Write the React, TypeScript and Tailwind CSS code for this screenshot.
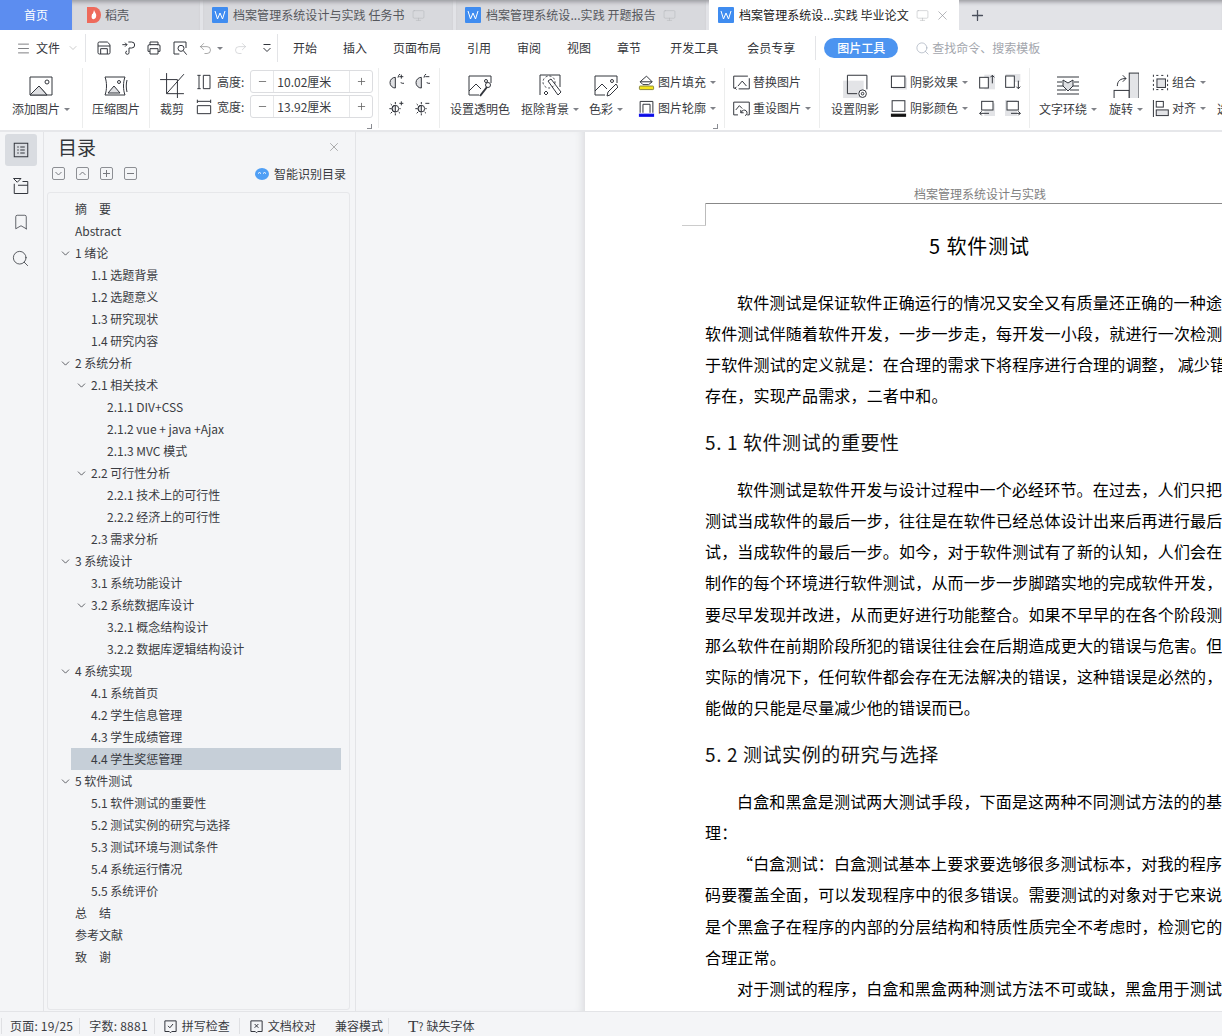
import type { ReactNode } from 'react';
import { Bookmark, ChevronDown, Menu, Minus, Monitor, Plus, Redo2, Search, Undo2, X } from 'lucide-react';

const FONT = '"Noto Sans CJK SC", "Liberation Sans", sans-serif';

type TocItem = { label: string; level: number; open?: boolean; active?: boolean };

const toc: TocItem[] = [
  { label: '摘　要', level: 0 },
  { label: 'Abstract', level: 0 },
  { label: '1 绪论', level: 0, open: true },
  { label: '1.1 选题背景', level: 1 },
  { label: '1.2 选题意义', level: 1 },
  { label: '1.3 研究现状', level: 1 },
  { label: '1.4 研究内容', level: 1 },
  { label: '2 系统分析', level: 0, open: true },
  { label: '2.1 相关技术', level: 1, open: true },
  { label: '2.1.1 DIV+CSS', level: 2 },
  { label: '2.1.2 vue + java +Ajax', level: 2 },
  { label: '2.1.3 MVC 模式', level: 2 },
  { label: '2.2 可行性分析', level: 1, open: true },
  { label: '2.2.1 技术上的可行性', level: 2 },
  { label: '2.2.2 经济上的可行性', level: 2 },
  { label: '2.3 需求分析', level: 1 },
  { label: '3 系统设计', level: 0, open: true },
  { label: '3.1 系统功能设计', level: 1 },
  { label: '3.2 系统数据库设计', level: 1, open: true },
  { label: '3.2.1 概念结构设计', level: 2 },
  { label: '3.2.2 数据库逻辑结构设计', level: 2 },
  { label: '4 系统实现', level: 0, open: true },
  { label: '4.1 系统首页', level: 1 },
  { label: '4.2 学生信息管理', level: 1 },
  { label: '4.3 学生成绩管理', level: 1 },
  { label: '4.4 学生奖惩管理', level: 1, active: true },
  { label: '5 软件测试', level: 0, open: true },
  { label: '5.1 软件测试的重要性', level: 1 },
  { label: '5.2 测试实例的研究与选择', level: 1 },
  { label: '5.3 测试环境与测试条件', level: 1 },
  { label: '5.4 系统运行情况', level: 1 },
  { label: '5.5 系统评价', level: 1 },
  { label: '总　结', level: 0 },
  { label: '参考文献', level: 0 },
  { label: '致　谢', level: 0 },
];

// small stroke icon wrapper, 24 unit box
const Ico = ({ size = 24, children, className = '' }: { size?: number; children: ReactNode; className?: string }) => (
  <svg
    width={size}
    height={size}
    viewBox="0 0 24 24"
    fill="none"
    stroke="#33363d"
    strokeWidth={24 / size}
    className={`shrink-0 ${className}`}
  >
    {children}
  </svg>
);

const Caret = () => <span className="ml-[4px] inline-block h-0 w-0 border-x-[3px] border-t-[3px] border-x-transparent border-t-[#808288]" />;

const WpsTabIcon = () => (
  <div className="flex h-[16px] w-[16px] shrink-0 items-center justify-center rounded-[1px] bg-[#3f8cf0]">
    <svg width="12" height="10" viewBox="0 0 12 10" fill="none" stroke="#fff" strokeWidth="1">
      <path d="M1 1l2.500 8L6 3l2.500 6L11 1" />
    </svg>
  </div>
);

const tabShade = 'shadow-[inset_0_5px_4px_-3px_#97989d]';

const DocTab = ({ title, active }: { title: string; active?: boolean }) => (
  <div
    className={`flex h-[30px] w-[250px] items-center pl-[9px] text-[12px] ${
      active ? 'bg-white text-[#222]' : `bg-[#d8d9dd] text-[#55575c] ${tabShade}`
    }`}
  >
    <WpsTabIcon />
    <span className="ml-[5px] whitespace-nowrap tracking-[0.060px]">{title}</span>
    <Monitor size={13} strokeWidth={1} className="ml-[7px] text-[#b4b6bb]" />
    {active && <X size={15} strokeWidth={1} className="ml-[6px] text-[#8a8c92]" />}
  </div>
);

const TabBar = () => (
  <div className={`flex h-[30px] shrink-0 bg-[#e2e3e7] ${tabShade}`}>
    <div className="flex h-[30px] w-[72px] items-center justify-center bg-[#5c8df0] text-[12px] text-white">首页</div>
    <div className={`flex h-[30px] w-[128px] items-center bg-[#d8d9dd] pl-[14px] text-[12px] text-[#55575c] ${tabShade}`}>
      <svg width="16" height="16" viewBox="0 0 16 16" className="shrink-0">
        <path d="M1 0h7a7 8 0 010 16H1z" fill="#ee6a5b" />
        <path d="M8 3c1 3 3 4 2 7-.5 2-3 3-4 1.500C5 10 6 8 6 7c1 .5 1.500-2 2-4z" fill="#fff" />
      </svg>
      <span className="ml-[3px]">稻壳</span>
    </div>
    <div className="w-[3px]" />
    <DocTab title="档案管理系统设计与实践 任务书" />
    <div className="w-[3px]" />
    <DocTab title="档案管理系统设...实践 开题报告" />
    <div className="w-[3px]" />
    <DocTab title="档案管理系统设...实践 毕业论文" active />
    <Plus size={17} strokeWidth={1.800} className="ml-[10px] mt-[7px] text-[#4a4f5c]" />
  </div>
);

const QuickIcons = () => (
  <div className="ml-[10px] flex items-center">
    <Ico size={16}>
      <path d="M3 5a2 2 0 012-2h12l4 4v12a2 2 0 01-2 2H5a2 2 0 01-2-2zM3 9h18M7 21v-8h10v8" />
    </Ico>
    <Ico size={16} className="ml-[9px]">
      <path d="M11 3h5a4.500 4.500 0 010 9h-4v7a2.500 2.500 0 11-3-2.500M2 7h7M6 4l3 3-3 3" />
    </Ico>
    <Ico size={16} className="ml-[9px]">
      <path d="M6 8V3h12v5M6 17H3V9a2 2 0 012-2h14a2 2 0 012 2v8h-3M6 13h12v8H6z" />
    </Ico>
    <Ico size={16} className="ml-[10px]">
      <path d="M11 21H3V3h18v9M13.500 8a4.500 4.500 0 100 9 4.500 4.500 0 000-9zM17 16l5 6" />
    </Ico>
    <Undo2 size={15} strokeWidth={1} className="ml-[10px] text-[#777]" />
    <Caret />
    <Redo2 size={15} strokeWidth={1} className="ml-[10px] text-[#c4c5c9]" />
    <Ico size={14} className="ml-[12px]">
      <path d="M6 6h12M6 12l6 6 6-6" />
    </Ico>
  </div>
);

const MenuRow = () => (
  <div className="flex h-[36px] shrink-0 items-center bg-white pl-[16px] text-[12px] text-[#33353a]">
    <Menu size={15} strokeWidth={1} className="text-[#33353a]" />
    <span className="ml-[5px]">文件</span>
    <ChevronDown size={12} strokeWidth={1} className="ml-[7px] text-[#999]" />
    <div className="ml-[6px] h-[28px] w-px bg-[#e3e4e7]" />
    <QuickIcons />
    <div className="ml-[3px] h-[28px] w-px bg-[#e3e4e7]" />
    <div className="ml-[15px] flex items-center gap-[26px] whitespace-nowrap">
      <span>开始</span>
      <span>插入</span>
      <span>页面布局</span>
      <span>引用</span>
      <span>审阅</span>
      <span>视图</span>
      <span>章节</span>
      <span className="ml-[3px]">开发工具</span>
      <span className="ml-[3px]">会员专享</span>
    </div>
    <div className="ml-[20px] h-[24px] w-px bg-[#e3e4e7]" />
    <div className="ml-[8px] flex h-[20px] w-[74px] items-center justify-center rounded-full bg-[#4c94f0] font-medium text-white">
      图片工具
    </div>
    <Search size={15} strokeWidth={1} className="ml-[17px] text-[#9aa3b3]" />
    <span className="ml-[2px] text-[#a3a6ad]">查找命令、搜索模板</span>
  </div>
);

const Sep = () => <div className="mt-[-2px] h-[60px] w-px shrink-0 bg-[#eceded]" />;

const BigBtn = ({ w, label, caret, children }: { w: number; label: string; caret?: boolean; children: ReactNode }) => (
  <div className="flex shrink-0 flex-col items-center" style={{ width: w }}>
    <div className="flex h-[30px] items-center justify-center">{children}</div>
    <div className="flex h-[18px] items-center whitespace-nowrap text-[12px]">
      {label}
      {caret && <Caret />}
    </div>
  </div>
);

const SmallBtn = ({ label, caret, children }: { label: string; caret?: boolean; children: ReactNode }) => (
  <div className="flex h-[20px] items-center whitespace-nowrap text-[12px]">
    {children}
    <span className="ml-[3px]">{label}</span>
    {caret && <Caret />}
  </div>
);

const Stepper = ({ value }: { value: string }) => (
  <div className="ml-[6px] flex h-[23px] w-[123px] items-center rounded-[3px] border border-[#dcdde0]">
    <div className="flex h-full w-[23px] items-center justify-center border-r border-[#e6e7e9]">
      <Minus size={11} strokeWidth={1.800} className="text-[#666]" />
    </div>
    <span className="flex-1 pl-[3px]">{value}</span>
    <div className="flex h-full w-[23px] items-center justify-center border-l border-[#e6e7e9]">
      <Plus size={11} strokeWidth={1.800} className="text-[#666]" />
    </div>
  </div>
);

// little corner mark at the bottom right of a ribbon group
const Launcher = () => (
  <div className="absolute bottom-[1px] right-[6px] h-[5px] w-[5px] border-b border-r border-[#8a8c92]" />
);

const Ribbon = () => (
  <div className="flex h-[64px] shrink-0 items-start overflow-hidden bg-white pt-[4px] text-[#3a3c42]">
    <BigBtn w={82} label="添加图片" caret>
      <Ico>
        <path d="M1 4h22v18H1zM1 22l9-9 8 9" />
        <path d="M1 22l9-9 8 9z" fill="#dfe0e3" />
        <circle cx="18" cy="9" r="2" />
      </Ico>
    </BigBtn>
    <Sep />
    <BigBtn w={66} label="压缩图片">
      <Ico>
        <path d="M1 4h20c-2 5-2 13 0 18H1c2-5 2-13 0-18z" />
        <path d="M4 20l6-7 6 7z" fill="#dfe0e3" />
        <circle cx="15" cy="9" r="1.500" />
        <path d="M23 7c-1 4-1 8 0 12" />
      </Ico>
    </BigBtn>
    <Sep />
    <div className="relative mt-[-2px] flex h-[62px] w-[228px] shrink-0 items-start pt-[2px]">
      <BigBtn w={44} label="裁剪">
        <Ico size={26}>
          <path d="M7 1v19h16M1 7h16v18M7 20L23 2" />
        </Ico>
      </BigBtn>
      <div className="ml-[2px] flex flex-col gap-[2px] text-[12px]">
        <div className="flex h-[23px] items-center">
          <Ico size={16}>
            <path d="M2 2h5M2 22h5M4.500 2v20M11 2h10v20H11z" />
          </Ico>
          <span className="ml-[5px]">高度:</span>
          <Stepper value="10.02厘米" />
        </div>
        <div className="flex h-[23px] items-center">
          <Ico size={16}>
            <path d="M2 1v5M22 1v5M2 3.500h20M2 10h20v12H2z" />
          </Ico>
          <span className="ml-[5px]">宽度:</span>
          <Stepper value="13.92厘米" />
        </div>
      </div>
      <Launcher />
    </div>
    <Sep />
    <div className="mt-[4px] grid w-[60px] shrink-0 grid-cols-2 justify-items-center gap-y-[10px] px-[4px]">
      <Ico size={16}>
        <path d="M11 5v16a8 8 0 010-16z" fill="#dfe0e3" />
        <path d="M15 5.500A8 8 0 1119 13M20 1v6M17 4h6" />
      </Ico>
      <Ico size={16}>
        <path d="M11 5v16a8 8 0 010-16z" fill="#dfe0e3" />
        <path d="M15 5.500A8 8 0 1119 13M17 4h6" />
      </Ico>
      <Ico size={16}>
        <path d="M11 8v10a5 5 0 010-10z" fill="#dfe0e3" />
        <circle cx="11" cy="13" r="5" />
        <path d="M11 3v3M11 20v3M2 13h3M17 13h2M4 6l2 2M4 20l2-2M18 20l-2-2M20 2v6M17 5h6" />
      </Ico>
      <Ico size={16}>
        <path d="M11 8v10a5 5 0 010-10z" fill="#dfe0e3" />
        <circle cx="11" cy="13" r="5" />
        <path d="M11 3v3M11 20v3M2 13h3M17 13h2M4 6l2 2M4 20l2-2M18 20l-2-2M17 5h6" />
      </Ico>
    </div>
    <Sep />
    <div className="relative mt-[-2px] flex h-[62px] w-[284px] shrink-0 items-start pt-[2px]">
      <BigBtn w={80} label="设置透明色">
        <Ico>
          <path d="M1 22V3h22v7M1 22h10M1 18l7-7 5 5" />
          <circle cx="18" cy="8" r="1.500" />
          <path d="M12 23l7-9" strokeWidth="2" />
          <circle cx="20" cy="12" r="2.500" />
        </Ico>
      </BigBtn>
      <BigBtn w={60} label="抠除背景" caret>
        <Ico>
          <path d="M2 22V2h20v12" />
          <circle cx="11" cy="9" r="6" strokeDasharray="2 2" />
          <path d="M10 8l3-2 10 13-3 3z" />
          <path d="M6 20l2 2 2-2-2-2z" />
        </Ico>
      </BigBtn>
      <BigBtn w={52} label="色彩" caret>
        <Ico>
          <path d="M1 22V3h22v7M1 22h10M1 18l7-7 5 5" />
          <circle cx="18" cy="8" r="1.500" />
          <path d="M13 23l1-4 8-8 2 3-8 8z" />
        </Ico>
      </BigBtn>
      <div className="ml-[6px] mt-[2px] flex flex-col gap-[6px]">
        <SmallBtn label="图片填充" caret>
          <Ico size={17}>
            <path d="M3 11l9-8 8 8-5 4H7z" />
            <path d="M3 11h17" />
            <rect x="2" y="17" width="20" height="5" rx="1" fill="#f5e51b" stroke="#8c8a40" />
          </Ico>
        </SmallBtn>
        <SmallBtn label="图片轮廓" caret>
          <Ico size={17}>
            <path d="M3 18V2h18v16M7 18V6h10v12" />
            <rect x="2" y="20" width="20" height="3" fill="#0b0be8" stroke="#0b0be8" />
          </Ico>
        </SmallBtn>
      </div>
      <Launcher />
    </div>
    <Sep />
    <div className="ml-[8px] mt-[2px] flex w-[86px] shrink-0 flex-col gap-[6px]">
      <SmallBtn label="替换图片">
        <Ico size={17}>
          <path d="M4 20H1V3h20M23 6v15H8" />
          <path d="M7 17l6-7 6 7M3 20l2-2M3 20l2 2" />
        </Ico>
      </SmallBtn>
      <SmallBtn label="重设图片" caret>
        <Ico size={17}>
          <path d="M7 21H1V3h22v18h-3M4 14l5-6 4 4" />
          <path d="M17 22a4 4 0 10-5-5l-1 1M11 14v4h4" />
        </Ico>
      </SmallBtn>
    </div>
    <Sep />
    <div className="flex w-[209px] shrink-0 items-start">
      <BigBtn w={70} label="设置阴影">
        <Ico size={26}>
          <rect x="1" y="8" width="19" height="16" fill="#e3e4e7" stroke="none" />
          <path d="M5 20V3h18v13M5 20h9" />
          <circle cx="19" cy="20" r="3.500" fill="#fff" />
          <circle cx="19" cy="20" r="1.200" />
        </Ico>
      </BigBtn>
      <div className="mt-[2px] flex flex-col gap-[6px]">
        <SmallBtn label="阴影效果" caret>
          <Ico size={17}>
            <rect x="4" y="5" width="20" height="17" fill="#e3e4e7" stroke="none" />
            <rect x="2" y="3" width="19" height="16" fill="#fff" />
          </Ico>
        </SmallBtn>
        <SmallBtn label="阴影颜色" caret>
          <Ico size={17}>
            <rect x="3" y="1" width="18" height="15" />
            <rect x="2" y="20" width="20" height="3" fill="#111" stroke="#111" />
          </Ico>
        </SmallBtn>
      </div>
      <div className="ml-[11px] mt-[4px] grid grid-cols-2 gap-x-[10px] gap-y-[10px]">
        <Ico size={16}>
          <rect x="8" y="1" width="16" height="22" fill="#e3e4e7" stroke="none" />
          <rect x="1" y="5" width="13" height="16" fill="#fff" />
          <path d="M20 2v12M17 5l3-3 3 3" />
        </Ico>
        <Ico size={16}>
          <rect x="1" y="0" width="22" height="12" fill="#e3e4e7" stroke="none" />
          <rect x="1" y="3" width="13" height="17" fill="#fff" />
          <path d="M20 10v12M17 19l3 3 3-3" />
        </Ico>
        <Ico size={16}>
          <rect x="8" y="5" width="16" height="19" fill="#e3e4e7" stroke="none" />
          <rect x="4" y="2" width="17" height="13" fill="#fff" />
          <path d="M1 20h14M4 17l-3 3 3 3" />
        </Ico>
        <Ico size={16}>
          <rect x="0" y="0" width="18" height="24" fill="#e3e4e7" stroke="none" />
          <rect x="3" y="2" width="17" height="13" fill="#fff" />
          <path d="M9 20h14M20 17l3 3-3 3" />
        </Ico>
      </div>
    </div>
    <Sep />
    <BigBtn w={76} label="文字环绕" caret>
      <Ico>
        <path d="M1 4h22M1 21h22M1 9h5M18 9h5M1 13h6M17 13h6M1 17h9M14 17h9" />
        <path d="M7 7l5 3 5-3v6l-5 5-5-5z" fill="#dfe0e3" />
      </Ico>
    </BigBtn>
    <BigBtn w={40} label="旋转" caret>
      <Ico size={26}>
        <rect x="1" y="17" width="14" height="8" fill="#fff" />
        <rect x="15" y="1" width="9" height="24" fill="#e3e4e7" />
        <path d="M4 13c0-5 3-7 8-7M9 3l3 3-3 3" />
      </Ico>
    </BigBtn>
    <div className="ml-[6px] mt-[2px] flex flex-col gap-[6px]">
      <SmallBtn label="组合" caret>
        <Ico size={17}>
          <rect x="7" y="7" width="12" height="12" fill="#e3e4e7" />
          <path d="M2 1v3M2 8v3M2 14v3M2 20v3M22 1v3M22 8v3M22 14v3M22 20v3M6 2h3M13 2h3M6 22h3M13 22h3" />
        </Ico>
      </SmallBtn>
      <SmallBtn label="对齐" caret>
        <Ico size={17}>
          <path d="M2 0v24" />
          <rect x="6" y="2" width="10" height="8" />
          <rect x="6" y="14" width="17" height="8" fill="#e3e4e7" />
        </Ico>
      </SmallBtn>
    </div>
    <span className="ml-[11px] mt-[30px] text-[12px]">选</span>
  </div>
);

const Rail = () => (
  <div className="flex w-[44px] shrink-0 flex-col items-center border-r border-[#e3e4e7] bg-[#f4f5f7] pt-[2px] pr-[2px]">
    <div className="flex h-[32px] w-[32px] items-center justify-center rounded-[3px] bg-[#d9dce1]">
      <Ico size={18}>
        <rect x="3" y="3" width="18" height="18" />
        <path d="M7 8h2M11 8h6M7 12h2M11 12h6M7 16h2M11 16h6" />
      </Ico>
    </div>
    <div className="mt-[4px] flex h-[32px] items-center">
      <Ico size={18}>
        <path d="M2 2h10l-5 5zM3 9v13h18V6h-7M8 11h13" />
      </Ico>
    </div>
    <div className="mt-[4px] flex h-[32px] items-center">
      <Bookmark size={18} strokeWidth={1} className="text-[#33363d]" />
    </div>
    <div className="mt-[4px] flex h-[32px] items-center">
      <Search size={19} strokeWidth={1} className="text-[#33363d]" />
    </div>
  </div>
);

const TocToolBtn = ({ children }: { children: ReactNode }) => (
  <div className="flex h-[13px] w-[13px] items-center justify-center rounded-[2px] border border-[#8d8f94]">
    <svg width="9" height="9" viewBox="0 0 9 9" fill="none" stroke="#77797e" strokeWidth="1">
      {children}
    </svg>
  </div>
);

const TocRow = ({ item }: { item: TocItem }) => {
  const pad = 4 + item.level * 16;
  return (
    <div
      className={`relative flex h-[22px] items-center whitespace-nowrap text-[12px] text-[#3a3c42] ${
        item.active ? 'bg-[#c6cfd8]' : ''
      }`}
      style={{ paddingLeft: pad }}
    >
      {item.open && (
        <ChevronDown
          size={13}
          strokeWidth={1.400}
          className="absolute top-[5px] text-[#33363d]"
          style={{ left: pad - 16 }}
        />
      )}
      {item.label}
    </div>
  );
};

const TocPanel = () => (
  <div className="flex w-[312px] shrink-0 flex-col border-r border-[#e3e4e7] bg-[#f4f5f7]">
    <div className="flex h-[29px] items-center justify-between px-[14px]">
      <span className="text-[19px] leading-none text-[#33353a]">目录</span>
      <X size={14} strokeWidth={1} className="text-[#777]" />
    </div>
    <div className="flex h-[25px] items-center pl-[8px] pr-[9px]">
      <div className="flex gap-[11px]">
        <TocToolBtn>
          <path d="M1.500 3l3 3 3-3" />
        </TocToolBtn>
        <TocToolBtn>
          <path d="M1.500 6l3-3 3 3" />
        </TocToolBtn>
        <TocToolBtn>
          <path d="M1 4.500h7M4.500 1v7" />
        </TocToolBtn>
        <TocToolBtn>
          <path d="M1 4.500h7" />
        </TocToolBtn>
      </div>
      <div className="ml-auto flex items-center text-[12px] text-[#3a3c42]">
        <svg width="14" height="12" viewBox="0 0 14 12">
          <ellipse cx="7" cy="6" rx="7" ry="6" fill="#4f9ff5" />
          <path d="M3 5.500l1.500-1 1.500 1M8 5.500l1.500-1 1.500 1" stroke="#fff" fill="none" />
        </svg>
        <span className="ml-[5px]">智能识别目录</span>
      </div>
    </div>
    <div className="ml-[3px] mt-[6px] h-[818px] w-[303px] overflow-hidden rounded-[3px] border border-[#e6e7ea] pl-[23px] pr-[8px] pt-[5px]">
      {toc.map((item) => (
        <TocRow key={item.label} item={item} />
      ))}
    </div>
  </div>
);

const Line = ({ text, indent }: { text: string; indent?: number }) => (
  <div className="h-[31.200px] whitespace-nowrap text-[16px] leading-[31.200px] tracking-[0.170px] text-black" style={{ paddingLeft: indent ?? 0 }}>
    {text}
  </div>
);

const SectionTitle = ({ text }: { text: string }) => (
  <div className="flex h-[62.500px] items-center whitespace-nowrap text-[19px] tracking-[0.600px] text-[#111]">{text}</div>
);

const DocPage = () => (
  <div className="min-w-0 flex-1 overflow-hidden bg-white">
    <div className="h-[70px] w-[800px] pl-[120px] pt-[54px]">
      <div className="relative h-[18px] w-[700px] border-b border-[#888] pl-[209px] text-[12px] leading-[15px] text-[#808080]">
        档案管理系统设计与实践
        <div className="absolute left-0 top-[17px] h-[22px] w-px bg-[#bbb]" />
        <div className="absolute left-[-23px] top-[39px] h-px w-[24px] bg-[#ccc]" />
      </div>
    </div>
    <div className="mt-[29px] w-[788px] whitespace-nowrap pl-[344px] text-[20px] leading-[30px] tracking-[0.900px] text-black">5 软件测试</div>
    <div className="w-[800px] pl-[120px] pt-[25.500px]">
      <Line indent={32} text="软件测试是保证软件正确运行的情况又安全又有质量还正确的一种途" />
      <Line text="软件测试伴随着软件开发，一步一步走，每开发一小段，就进行一次检测" />
      <Line text="于软件测试的定义就是：在合理的需求下将程序进行合理的调整， 减少错" />
      <Line text="存在，实现产品需求，二者中和。" />
      <SectionTitle text="5. 1 软件测试的重要性" />
      <Line indent={32} text="软件测试是软件开发与设计过程中一个必经环节。在过去，人们只把" />
      <Line text="测试当成软件的最后一步，往往是在软件已经总体设计出来后再进行最后" />
      <Line text="试，当成软件的最后一步。如今，对于软件测试有了新的认知，人们会在" />
      <Line text="制作的每个环境进行软件测试，从而一步一步脚踏实地的完成软件开发，" />
      <Line text="要尽早发现并改进，从而更好进行功能整合。如果不早早的在各个阶段测" />
      <Line text="那么软件在前期阶段所犯的错误往往会在后期造成更大的错误与危害。但" />
      <Line text="实际的情况下，任何软件都会存在无法解决的错误，这种错误是必然的，" />
      <Line text="能做的只能是尽量减少他的错误而已。" />
      <SectionTitle text="5. 2 测试实例的研究与选择" />
      <Line indent={32} text="白盒和黑盒是测试两大测试手段，下面是这两种不同测试方法的的基" />
      <Line text="理：" />
      <Line indent={32} text="“白盒测试：白盒测试基本上要求要选够很多测试标本，对我的程序" />
      <Line text="码要覆盖全面，可以发现程序中的很多错误。需要测试的对象对于它来说" />
      <Line text="是个黑盒子在程序的内部的分层结构和特质性质完全不考虑时，检测它的" />
      <Line text="合理正常。" />
      <Line indent={32} text="对于测试的程序，白盒和黑盒两种测试方法不可或缺，黑盒用于测试功" />
    </div>
  </div>
);

const StatusSep = () => <div className="h-[16px] w-px bg-[#dfe0e3]" />;

const StatusBar = () => (
  <div className="flex h-[25px] shrink-0 items-center whitespace-nowrap border-t border-[#e3e4e7] bg-[#f4f5f7] pl-px pt-[4px] text-[12px] text-[#3a3c42]">
    <StatusSep />
    <span className="ml-[8px] tracking-[0.200px]">页面: 19/25</span>
    <div className="ml-[6px]">
      <StatusSep />
    </div>
    <span className="ml-[9px] tracking-[0.250px]">字数: 8881</span>
    <div className="ml-[6px]">
      <StatusSep />
    </div>
    <Ico size={15} className="ml-[8px]">
      <path d="M3 3h18v17h-7l-2 2-2-2H3zM8 11l3 3 5-6" />
    </Ico>
    <span className="ml-[4px]">拼写检查</span>
    <div className="ml-[9px]">
      <StatusSep />
    </div>
    <Ico size={15} className="ml-[9px]">
      <path d="M3 3h18v17h-7l-2 2-2-2H3zM9 8l6 6M15 8l-6 6" />
    </Ico>
    <span className="ml-[4px]">文档校对</span>
    <span className="ml-[19px]">兼容模式</span>
    <div className="ml-[5px]">
      <StatusSep />
    </div>
    <span className="ml-[19px] font-['Liberation_Serif'] text-[17px] leading-none">T</span>
    <span className="text-[11px]">?</span>
    <span className="ml-[3px]">缺失字体</span>
  </div>
);

export default function App() {
  return (
    <div className="flex h-[1036px] w-[1222px] flex-col overflow-hidden bg-white" style={{ fontFamily: FONT }}>
      <TabBar />
      <MenuRow />
      <Ribbon />
      <div className="flex min-h-0 flex-1 border-t-2 border-[#e6e7ea]">
        <Rail />
        <TocPanel />
        <div className="w-[229px] shrink-0 bg-[#f4f5f7] shadow-[inset_-8px_0_8px_-6px_#d9dadd]" />
        <DocPage />
      </div>
      <StatusBar />
    </div>
  );
}
